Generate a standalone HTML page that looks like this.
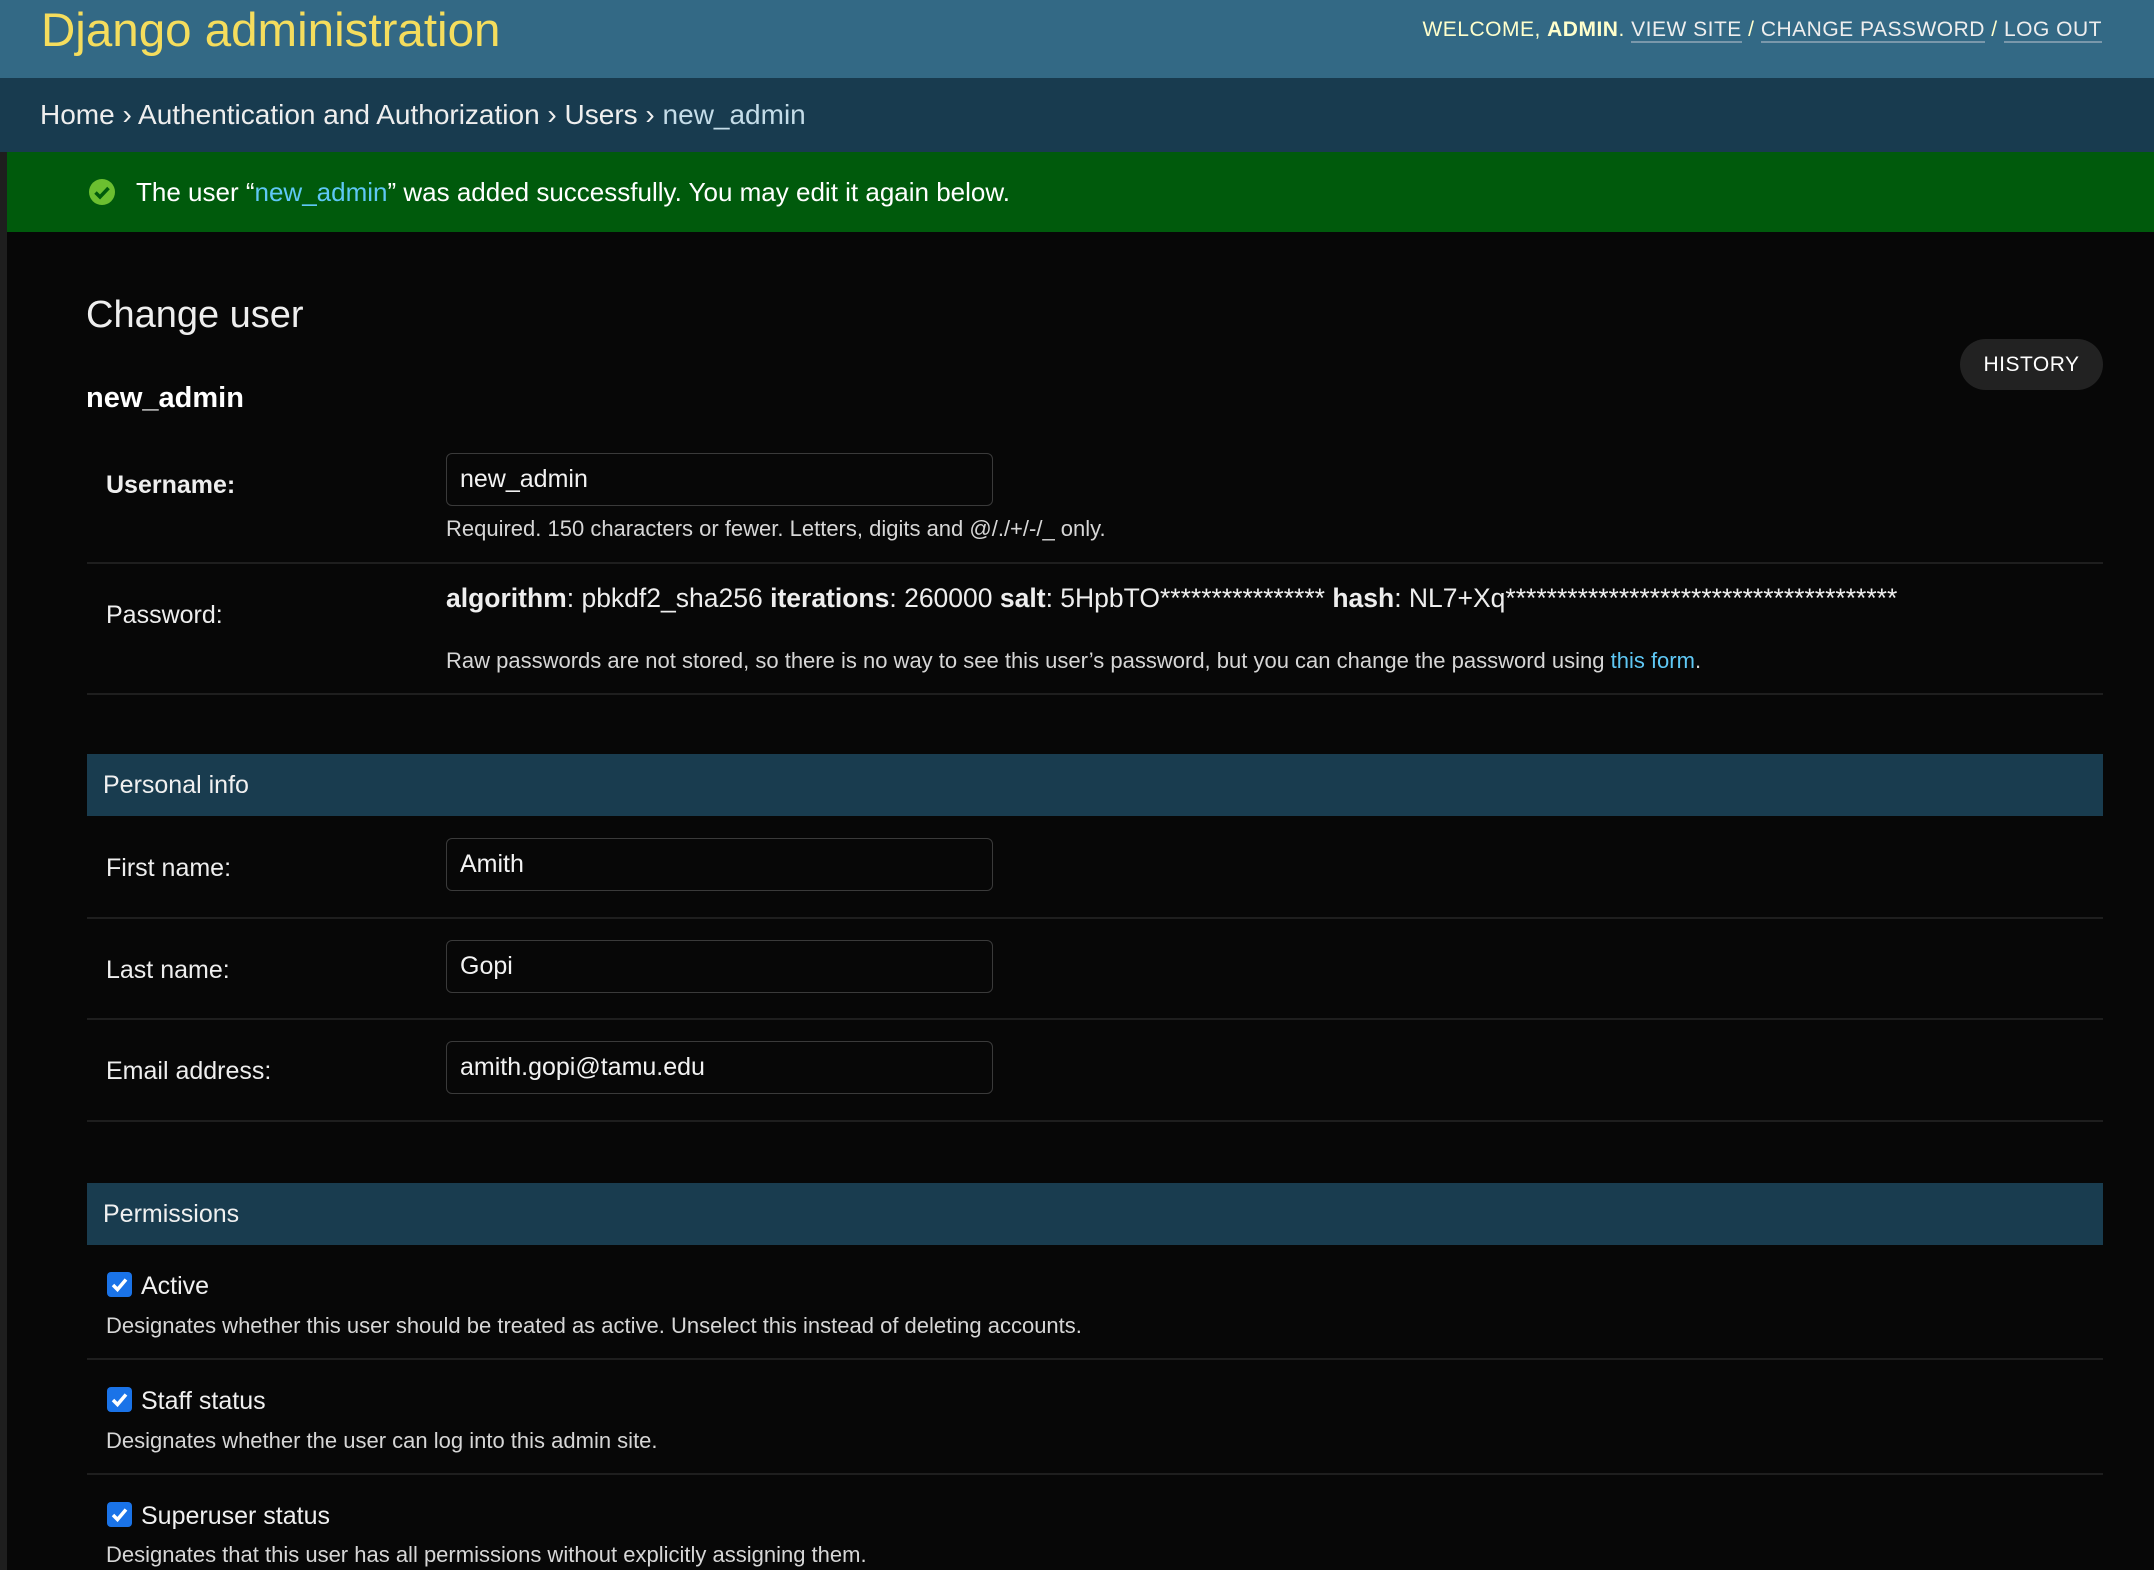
<!DOCTYPE html>
<html><head><meta charset="utf-8"><style>
*{margin:0;padding:0;box-sizing:border-box}
body{width:2154px;height:1570px;overflow:hidden;background:#070707;font-family:"Liberation Sans",sans-serif;color:#eee;position:relative}
.a{position:absolute;white-space:nowrap}
#hdr{left:0;top:0;width:2154px;height:78px;background:#336985}
#bc{left:0;top:78px;width:2154px;height:74px;background:#183b4f}
#strip{left:0;top:152px;width:7px;height:1418px;background:#1e1e1e}
#msg{left:7px;top:152px;width:2147px;height:80px;background:#005a0c}
.lbl{font-size:25px;line-height:30px;color:#eee}
.inp{position:absolute;left:446px;width:547px;height:53px;border:1.5px solid #3a3a3a;border-radius:6px;background:#070707;font-size:25px;line-height:50px;padding-left:13px;color:#f2f2f2}
.help{font-size:22px;color:#d6d6d6;line-height:26px}
.hr{position:absolute;left:87px;width:2016px;height:2px;background:#1e1e1e}
.sec{position:absolute;left:87px;width:2016px;height:62px;background:#193c4f;font-size:25px;line-height:62px;padding-left:16px;color:#f0f0f0}
.cb{position:absolute;left:107px;width:25px;height:25px;background:#1a73e8;border-radius:4px}
</style></head><body>
<div class="a" id="hdr"></div>
<div class="a" style="left:41px;top:3px;font-size:47.5px;line-height:56px;color:#f5dd5d">Django administration</div>
<div class="a" style="right:52px;top:16px;font-size:21px;line-height:28px;color:#ffffcc;letter-spacing:0.5px">WELCOME, <b>ADMIN</b>. <span style="color:#eee;border-bottom:2px solid #7a98ab">VIEW SITE</span> / <span style="color:#eee;border-bottom:2px solid #7a98ab">CHANGE PASSWORD</span> / <span style="color:#eee;border-bottom:2px solid #7a98ab">LOG OUT</span></div>
<div class="a" id="bc"></div>
<div class="a" style="left:40px;top:98px;font-size:28px;line-height:34px;color:#eee">Home › Authentication and Authorization › Users › <span style="color:#c4dce8">new_admin</span></div>
<div class="a" id="strip"></div>
<div class="a" id="msg"></div>
<svg class="a" style="left:88px;top:178px" width="28" height="28" viewBox="0 0 28 28"><circle cx="14" cy="14" r="13" fill="#6bbf30"/><path d="M7.5 14.5l4.5 4.5 8.5-9" stroke="#005a0c" stroke-width="3.5" fill="none"/></svg>
<div class="a" style="left:136px;top:176px;font-size:26px;line-height:32px;color:#fff">The user “<span style="color:#5fc8f5">new_admin</span>” was added successfully. You may edit it again below.</div>

<div class="a" style="left:86px;top:292px;font-size:38px;line-height:46px;font-weight:300;color:#eee">Change user</div>
<div class="a" style="left:1960px;top:339px;width:143px;height:51px;border-radius:26px;background:#222;font-size:21px;line-height:51px;text-align:center;color:#fff;letter-spacing:0.5px">HISTORY</div>
<div class="a" style="left:86px;top:381px;font-size:29px;line-height:34px;font-weight:bold;color:#fff">new_admin</div>

<div class="a lbl" style="left:106px;top:470px;font-weight:bold">Username:</div>
<div class="inp" style="top:453px">new_admin</div>
<div class="a help" style="left:446px;top:516px">Required. 150 characters or fewer. Letters, digits and @/./+/-/_ only.</div>
<div class="hr" style="top:562px"></div>

<div class="a lbl" style="left:106px;top:600px">Password:</div>
<div class="a" style="left:446px;top:583px;font-size:26.5px;line-height:30px;color:#eee"><b>algorithm</b>: pbkdf2_sha256 <b>iterations</b>: 260000 <b>salt</b>: 5HpbTO**************** <b>hash</b>: NL7+Xq**************************************</div>
<div class="a help" style="left:446px;top:648px">Raw passwords are not stored, so there is no way to see this user’s password, but you can change the password using <span style="color:#5fc8f5">this form</span>.</div>
<div class="hr" style="top:693px"></div>

<div class="sec" style="top:754px">Personal info</div>
<div class="a lbl" style="left:106px;top:853px">First name:</div>
<div class="inp" style="top:838px">Amith</div>
<div class="hr" style="top:917px"></div>
<div class="a lbl" style="left:106px;top:955px">Last name:</div>
<div class="inp" style="top:940px">Gopi</div>
<div class="hr" style="top:1018px"></div>
<div class="a lbl" style="left:106px;top:1056px">Email address:</div>
<div class="inp" style="top:1041px">amith.gopi@tamu.edu</div>
<div class="hr" style="top:1120px"></div>

<div class="sec" style="top:1183px">Permissions</div>
<div class="cb" style="top:1272px"><svg width="25" height="25" viewBox="0 0 25 25"><path d="M6 13l4.5 4.5L19 7.5" stroke="#fff" stroke-width="3.5" fill="none"/></svg></div>
<div class="a lbl" style="left:141px;top:1271px;color:#f0f0f0">Active</div>
<div class="a help" style="left:106px;top:1313px">Designates whether this user should be treated as active. Unselect this instead of deleting accounts.</div>
<div class="hr" style="top:1358px"></div>
<div class="cb" style="top:1387px"><svg width="25" height="25" viewBox="0 0 25 25"><path d="M6 13l4.5 4.5L19 7.5" stroke="#fff" stroke-width="3.5" fill="none"/></svg></div>
<div class="a lbl" style="left:141px;top:1386px;color:#f0f0f0">Staff status</div>
<div class="a help" style="left:106px;top:1428px">Designates whether the user can log into this admin site.</div>
<div class="hr" style="top:1473px"></div>
<div class="cb" style="top:1502px"><svg width="25" height="25" viewBox="0 0 25 25"><path d="M6 13l4.5 4.5L19 7.5" stroke="#fff" stroke-width="3.5" fill="none"/></svg></div>
<div class="a lbl" style="left:141px;top:1501px;color:#f0f0f0">Superuser status</div>
<div class="a help" style="left:106px;top:1542px">Designates that this user has all permissions without explicitly assigning them.</div>
</body></html>
